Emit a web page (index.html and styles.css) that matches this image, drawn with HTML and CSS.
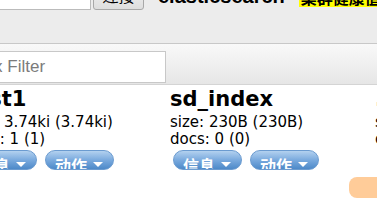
FILE: index.html
```html
<!DOCTYPE html>
<html lang="zh-CN">
<head>
  <meta charset="UTF-8" />
  <meta name="viewport" content="width=device-width, initial-scale=1.0"/>
  <title>elasticsearch-head</title>
  <link rel="stylesheet" href="styles.css">
</head>
<body>
  <div class="page">
    <header class="top-bar">
      <div class="connect">
        <input class="connect-input" type="text" value="">
        <button class="connect-btn">连接</button>
      </div>
      <h1 class="brand">elasticsearch</h1>
      <span class="health">集群健康值: green</span>
    </header>

    <div class="filter-bar">
      <input class="index-filter" type="text" placeholder="Index Filter">
    </div>

    <section class="overview">
      <div class="index-row">
        <div class="index-card">
          <h2 class="index-name">test1</h2>
          <div class="index-stat">size: 3.74ki (3.74ki)</div>
          <div class="index-stat">docs: 1 (1)</div>
          <div class="index-actions">
            <button class="pill-btn">信息 <span class="caret"></span></button>
            <button class="pill-btn">动作 <span class="caret"></span></button>
          </div>
        </div>
        <div class="index-card">
          <h2 class="index-name">sd_index</h2>
          <div class="index-stat">size: 230B (230B)</div>
          <div class="index-stat">docs: 0 (0)</div>
          <div class="index-actions">
            <button class="pill-btn">信息 <span class="caret"></span></button>
            <button class="pill-btn">动作 <span class="caret"></span></button>
          </div>
        </div>
        <div class="index-card">
          <h2 class="index-name alias">.kibana</h2>
          <div class="index-stat">size: 3.2ki (3.2ki)</div>
          <div class="index-stat">docs: 2 (2)</div>
        </div>
      </div>

      <div class="shard-row">
        <div class="shard unassigned">0</div>
      </div>
    </section>
  </div>
</body>
</html>
```

FILE: styles.css
```css
body {
  margin: 0;
  overflow: hidden;
  background: #fff;
  font-family: "DejaVu Sans", Verdana, sans-serif;
  color: #000;
}

.page {
  margin-left: -35px;
  width: 700px;
}

/* header */
.top-bar {
  display: flex;
  align-items: flex-start;
  height: 43px;
  background: #ececec;
  border-bottom: 1px solid #c8c8c8;
}

.connect {
  display: flex;
  align-items: flex-start;
  margin-top: -20px;
}

.connect-input {
  width: 120px;
  height: 24px;
  margin: 0;
  padding: 2px;
  border: 1px solid #bbb;
  background: #fff;
  box-sizing: content-box;
}

.connect-btn {
  width: 51px;
  height: 30px;
  margin: 0 0 0 2px;
  padding: 0;
  font: 16px "Noto Sans CJK SC", sans-serif;
  line-height: 20px;
  border: 1px solid #a8a8a8;
  border-radius: 3px;
  background: linear-gradient(#f6f6f6, #dedede);
  color: #000;
}

.brand {
  margin: -16px 0 0 14px;
  font: bold 20px/24px "Liberation Sans", Arial, sans-serif;
}

.health {
  margin: -13px 0 0 14px;
  padding: 0 4px 0 2px;
  height: 20px;
  line-height: 20px;
  background: #ffff00;
  font: bold 16px/20px "Noto Sans CJK SC", sans-serif;
  white-space: nowrap;
}

/* filter */
.filter-bar {
  padding: 7px 0 1px;
  background: linear-gradient(#f9f9f9, #e6e6e6);
  border-bottom: 1px solid #d4d4d4;
}

.index-filter {
  width: 201px;
  height: 26px;
  margin: 0 0 0 -8px;
  padding: 2px 3px;
  border: 1px solid #c8c8c8;
  background: #fff;
  font: 17px "Liberation Sans", Arial, sans-serif;
  box-sizing: content-box;
}

.index-filter::placeholder {
  color: #7b7b7b;
}

/* overview */
.index-row {
  display: flex;
}

.index-card {
  width: 205px;
  flex: none;
}

.index-name {
  margin: 0;
  font-size: 21px;
  line-height: 29px;
  font-weight: bold;
}

.index-name.alias {
  color: #8b1a1a;
}

.index-stat {
  font-size: 15px;
  line-height: 16.5px;
}

.index-actions {
  display: flex;
  gap: 8px;
  margin: 3px 0 0 3px;
}

.pill-btn {
  display: flex;
  align-items: flex-start;
  justify-content: space-between;
  width: 69px;
  height: 20px;
  padding: 4px 10px 0 9px;
  box-sizing: border-box;
  overflow: hidden;
  border: 1px solid #6b9bd0;
  border-radius: 10px;
  background: linear-gradient(#b3d1ef, #7aaade 50%, #4d89c8);
  color: #fff;
  font: bold 16px/20px "Noto Sans CJK SC", sans-serif;
}

.caret {
  width: 0;
  height: 0;
  margin-top: 7px;
  border-left: 5px solid transparent;
  border-right: 5px solid transparent;
  border-top: 5px solid #fff;
}

.shard-row {
  display: flex;
  padding: 7px 0 0 384px;
}

.shard {
  width: 40px;
  height: 21px;
  border-radius: 8px;
  font-size: 12px;
  line-height: 21px;
  text-indent: 30px;
  color: transparent;
}

.shard.unassigned {
  background: #ffcc99;
}
```
